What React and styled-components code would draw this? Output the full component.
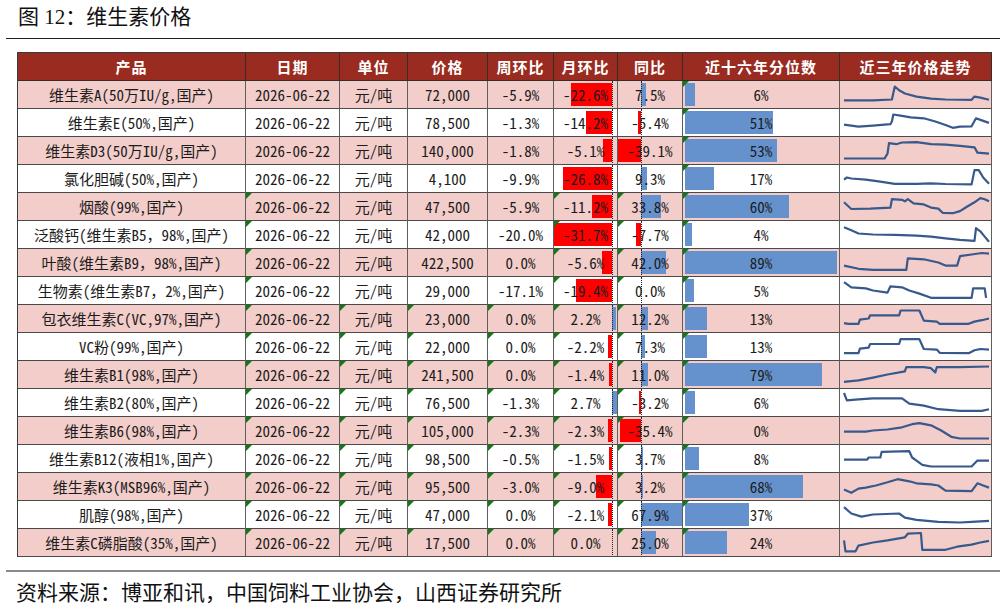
import React from 'react';
import styled, { createGlobalStyle } from 'styled-components';

const Global = createGlobalStyle`
  html, body { margin: 0; padding: 0; background: #fff; }
  body { font-family: "Noto Sans CJK SC", sans-serif; }
`;

const COLS = '228px 94px 68px 80px 66px 64px 65px 157px 152px';
const CELL_FONT = '"Noto Sans Mono CJK SC", "Noto Sans CJK SC", sans-serif';

const Page = styled.div`
  width: 1007px;
  height: 610px;
  display: flex;
  flex-direction: column;
  background: #fff;
`;

const Title = styled.h1`
  margin: 0;
  height: 38px;
  box-sizing: border-box;
  padding: 3px 0 0 18px;
  font: 400 21px/28px "Liberation Serif", "Noto Sans CJK SC", serif;
  color: #111;
`;

const Rule = styled.div`
  margin: 0 7px 0 6px;
  border-top: ${p => p.$thick ? '2px solid #8a8a8a' : '1px solid #222'};
`;

const Table = styled.div`
  margin: 13px 0 0 17px;
  width: 975px;
  display: flex;
  flex-direction: column;
  border-top: 1px solid #3a3a3a;
  border-left: 1px solid #3a3a3a;
  box-sizing: border-box;
`;

const Row = styled.div`
  display: grid;
  grid-template-columns: ${COLS};
  height: 28px;
  background: ${p => p.$bg};
`;

const HeadCell = styled.div`
  display: flex;
  align-items: center;
  justify-content: center;
  background: #9a2b20;
  color: #fff;
  font: 700 15px/1 "Noto Sans CJK SC", sans-serif;
  letter-spacing: 1px;
  border-right: 1px solid #3a2a28;
  border-bottom: 1px solid #3a2a28;
  box-sizing: border-box;
  height: 28px;
`;

const Cell = styled.div`
  position: relative;
  display: flex;
  align-items: center;
  justify-content: center;
  font: 400 15px/1 ${CELL_FONT};
  color: #1c1c1c;
  border-right: 1px solid #5e5e5e;
  border-bottom: 1px solid #4a4a4a;
  box-sizing: border-box;
  height: 28px;
  overflow: hidden;
  white-space: nowrap;
`;

const Label = styled.span`
  position: relative;
  z-index: 2;
`;

const Flag = styled.span`
  position: absolute;
  left: 0;
  top: 0;
  width: 0;
  height: 0;
  border-top: 6px solid #137a13;
  border-right: 6px solid transparent;
  z-index: 3;
`;

const Bar = styled.span`
  position: absolute;
  top: 2px;
  bottom: 2px;
  background: ${p => p.$neg ? '#ff0000' : '#6592cc'};
  z-index: 1;
`;

const Axis = styled.span`
  position: absolute;
  top: 0;
  bottom: -1px;
  width: 0;
  border-left: 1px dotted #222;
  z-index: 2;
`;

const PctBar = styled.span`
  position: absolute;
  left: 2px;
  top: 2px;
  bottom: 2px;
  background: #6592cc;
  z-index: 1;
`;

const Spark = styled.svg`
  display: block;
`;

const Footer = styled.div`
  margin-top: 13px;
`;

const Source = styled.p`
  margin: 0;
  padding: 6px 0 0 16px;
  font: 400 21px/26px "Noto Sans CJK SC", sans-serif;
  color: #111;
`;

const headers = ['产品', '日期', '单位', '价格', '周环比', '月环比', '同比', '近十六年分位数', '近三年价格走势'];

const rows = [
  ['维生素A(50万IU/g,国产)', '72,000', -5.9, -22.6, 7.5, 6],
  ['维生素E(50%,国产)', '78,500', -1.3, -14.2, -5.4, 51],
  ['维生素D3(50万IU/g,国产)', '140,000', -1.8, -5.1, -39.1, 53],
  ['氯化胆碱(50%,国产)', '4,100', -9.9, -26.8, 9.3, 17],
  ['烟酸(99%,国产)', '47,500', -5.9, -11.2, 33.8, 60],
  ['泛酸钙(维生素B5，98%,国产)', '42,000', -20.0, -31.7, -7.7, 4],
  ['叶酸(维生素B9，98%,国产)', '422,500', 0.0, -5.6, 42.0, 89],
  ['生物素(维生素B7，2%,国产)', '29,000', -17.1, -19.4, 0.0, 5],
  ['包衣维生素C(VC,97%,国产)', '23,000', 0.0, 2.2, 12.2, 13],
  ['VC粉(99%,国产)', '22,000', 0.0, -2.2, 7.3, 13],
  ['维生素B1(98%,国产)', '241,500', 0.0, -1.4, 11.0, 79],
  ['维生素B2(80%,国产)', '76,500', -1.3, 2.7, -3.2, 6],
  ['维生素B6(98%,国产)', '105,000', -2.3, -2.3, -35.4, 0],
  ['维生素B12(液相1%,国产)', '98,500', -0.5, -1.5, 3.7, 8],
  ['维生素K3(MSB96%,国产)', '95,500', -3.0, -9.0, 3.2, 68],
  ['肌醇(98%,国产)', '47,000', 0.0, -2.1, 67.9, 37],
  ['维生素C磷脂酸(35%,国产)', '17,500', 0.0, 0.0, 25.0, 24],
];

const sparks = [
  [[0,.78],[.2,.78],[.33,.74],[.35,.12],[.38,.3],[.42,.45],[.5,.6],[.6,.7],[.7,.74],[.88,.75],[.9,.6],[.94,.65],[1,.75]],
  [[0,.6],[.1,.7],[.2,.65],[.32,.58],[.33,.45],[.34,.12],[.4,.18],[.46,.25],[.55,.3],[.63,.45],[.7,.62],[.75,.75],[.8,.7],[.88,.68],[.91,.3],[.95,.4],[1,.52]],
  [[0,.88],[.28,.88],[.3,.65],[.31,.15],[.36,.2],[.4,.12],[.5,.1],[.6,.2],[.7,.22],[.8,.28],[.9,.35],[.92,.6],[1,.65]],
  [[0,.55],[.02,.45],[.05,.5],[.15,.55],[.25,.65],[.35,.75],[.5,.75],[.6,.73],[.7,.76],[.88,.78],[.9,.1],[.93,.1],[.96,.45],[1,.75]],
  [[0,.3],[.05,.62],[.18,.6],[.32,.55],[.33,.15],[.4,.18],[.42,.25],[.44,.15],[.48,.35],[.55,.4],[.6,.55],[.65,.6],[.68,.8],[.75,.82],[.8,.72],[.85,.5],[.9,.3],[.94,.1],[.97,.15],[1,.25]],
  [[0,.15],[.05,.3],[.1,.45],[.2,.5],[.35,.52],[.5,.55],[.6,.6],[.7,.68],[.8,.75],[.9,.8],[.91,.2],[.94,.35],[.97,.6],[1,.85]],
  [[0,.65],[.1,.8],[.2,.85],[.43,.85],[.44,.3],[.55,.35],[.65,.5],[.7,.65],[.78,.65],[.8,.2],[.88,.12],[.95,.05],[1,.08]],
  [[0,.1],[.05,.35],[.15,.4],[.2,.5],[.3,.6],[.32,.3],[.4,.35],[.45,.5],[.52,.65],[.6,.85],[.88,.85],[.89,.4],[.97,.4],[.98,.85]],
  [[0,.72],[.03,.75],[.1,.75],[.11,.55],[.17,.5],[.18,.35],[.38,.35],[.39,.12],[.52,.12],[.55,.6],[.64,.65],[.66,.75],[.86,.75],[.9,.65],[.95,.58],[1,.5]],
  [[0,.82],[.1,.82],[.11,.6],[.17,.55],[.18,.38],[.38,.38],[.39,.15],[.52,.15],[.55,.62],[.64,.65],[.66,.8],[.86,.82],[.9,.68],[.94,.62],[1,.65]],
  [[0,.85],[.1,.78],[.2,.65],[.3,.5],[.42,.35],[.43,.15],[.55,.15],[.6,.2],[.63,.4],[.64,.15],[.8,.15],[1,.12]],
  [[0,.05],[.02,.4],[.1,.35],[.2,.3],[.4,.3],[.45,.55],[.55,.65],[.65,.82],[.8,.9],[.95,.9],[1,.82]],
  [[0,.55],[.15,.55],[.2,.5],[.3,.45],[.4,.35],[.47,.2],[.52,.15],[.6,.25],[.67,.5],[.74,.8],[.8,.88],[1,.88]],
  [[0,.55],[.16,.55],[.17,.45],[.25,.45],[.26,.18],[.45,.15],[.47,.45],[.5,.6],[.54,.8],[.6,.88],[.88,.88],[.92,.6],[1,.6]],
  [[0,.65],[.05,.8],[.1,.6],[.15,.55],[.22,.45],[.3,.3],[.37,.15],[.45,.25],[.5,.35],[.6,.4],[.65,.45],[.7,.7],[.88,.72],[.92,.35],[.96,.45],[1,.55]],
  [[0,.15],[.05,.45],[.12,.6],[.2,.5],[.38,.45],[.42,.65],[.5,.75],[.65,.85],[.8,.88],[.88,.85],[1,.8]],
  [[0,.4],[.01,.92],[.08,.92],[.1,.65],[.2,.5],[.3,.4],[.42,.25],[.44,.08],[.53,.05],[.54,.85],[.7,.85],[.78,.7],[.88,.6],[.94,.5],[1,.42]],
];

const fmt = v => `${v.toFixed(1)}%`;

function flagsFor(i) {
  if (i >= 8) return { date: true, unit: true, price: true, week: true, month: true, yoy: true };
  if (i >= 4) return { date: true, month: true, yoy: true };
  return {};
}

function DataBar({ value, axis, colWidth, scale }) {
  const w = Math.abs(value) * scale;
  if (w < 0.5) return <Axis style={{ left: axis }} />;
  const neg = value < 0;
  const room = neg ? axis : colWidth - 1 - axis;
  const width = Math.min(w, room);
  return (
    <>
      <Bar $neg={neg} style={{ left: neg ? axis - width : axis, width }} />
      <Axis style={{ left: axis }} />
    </>
  );
}

function Sparkline({ pts }) {
  const W = 150, H = 27;
  const d = pts.map(([x, y]) => `${(3 + x * 145).toFixed(1)},${(3 + y * 21).toFixed(1)}`).join(' ');
  return (
    <Spark width={W} height={H} viewBox={`0 0 ${W} ${H}`}>
      <polyline points={d} fill="none" stroke="#37598c" strokeWidth="2.2" strokeLinejoin="round" />
    </Spark>
  );
}

export default function App() {
  return (
    <Page>
      <Global />
      <Title>图 12：维生素价格</Title>
      <Rule />
      <Table>
        <Row>
          {headers.map(h => <HeadCell key={h}>{h}</HeadCell>)}
        </Row>
        {rows.map((r, i) => {
          const [name, price, week, month, yoy, pct] = r;
          const f = flagsFor(i);
          return (
            <Row key={name} $bg={i % 2 === 0 ? '#f2cdca' : '#ffffff'}>
              <Cell><Label>{name}</Label></Cell>
              <Cell>{f.date && <Flag />}<Label>2026-06-22</Label></Cell>
              <Cell>{f.unit && <Flag />}<Label>元/吨</Label></Cell>
              <Cell>{f.price && <Flag />}<Label>{price}</Label></Cell>
              <Cell>{f.week && <Flag />}<Label>{fmt(week)}</Label></Cell>
              <Cell>
                {f.month && <Flag />}
                <DataBar value={month} axis={58} colWidth={64} scale={1.83} />
                <Label>{fmt(month)}</Label>
              </Cell>
              <Cell>
                {f.yoy && <Flag />}
                <DataBar value={yoy} axis={23} colWidth={65} scale={0.6} />
                <Label>{fmt(yoy)}</Label>
              </Cell>
              <Cell>
                <Flag />
                {pct > 0 && <PctBar style={{ width: Math.min(pct * 1.73, 152) }} />}
                <Label>{pct}%</Label>
              </Cell>
              <Cell><Sparkline pts={sparks[i]} /></Cell>
            </Row>
          );
        })}
      </Table>
      <Footer>
        <Rule $thick />
        <Source>资料来源：博亚和讯，中国饲料工业协会，山西证券研究所</Source>
      </Footer>
    </Page>
  );
}
